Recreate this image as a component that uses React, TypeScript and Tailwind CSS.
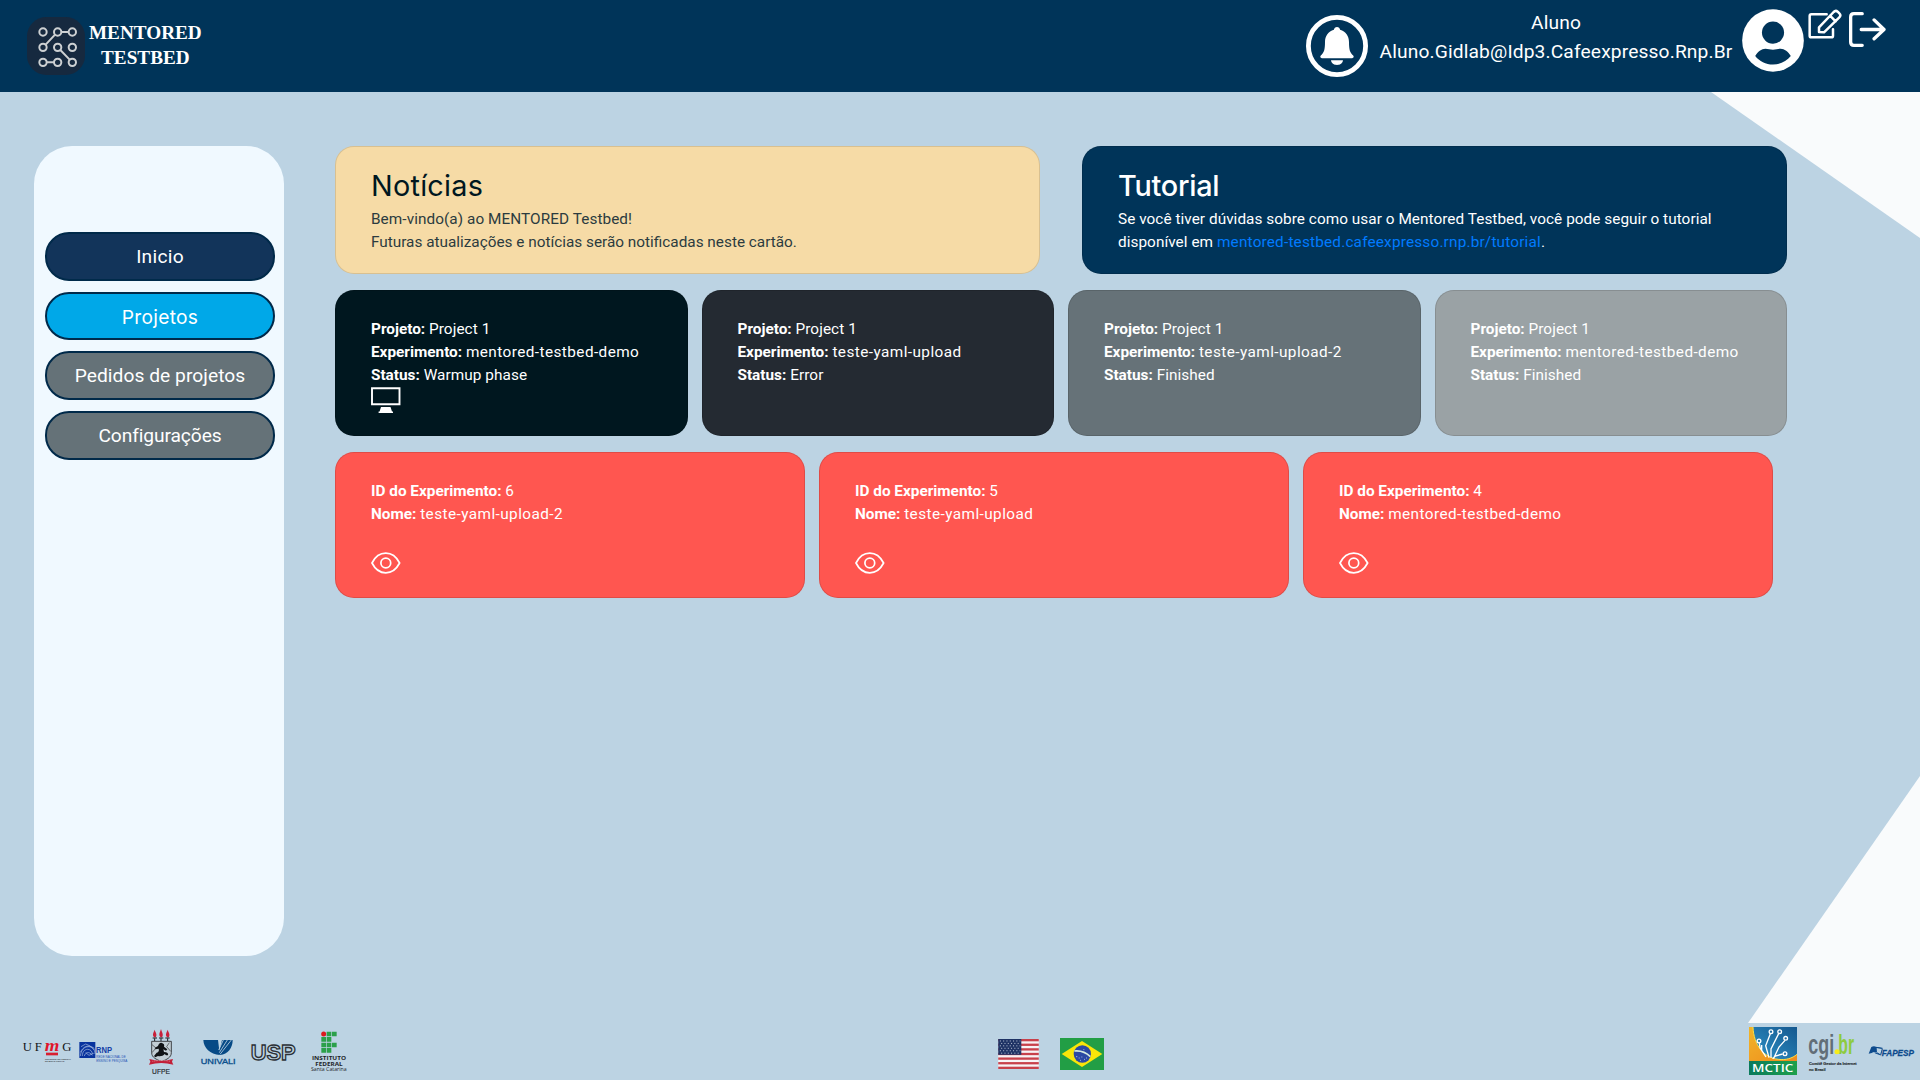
import type { ReactNode } from "react";

function Brand() {
  const nodes = [
    [129, 96], [173, 96], [217, 96],
    [129, 142], [173, 142], [217, 142],
    [129, 187], [173, 187], [217, 187],
  ];
  return (
    <div className="flex items-center">
      <svg viewBox="81 51 174 174" className="size-[58px]" fill="none" stroke="#cdd0d2" strokeWidth="6">
        <rect x="81" y="51" width="174" height="174" rx="58" fill="#16293f" stroke="none" />
        {nodes.map(([x, y]) => (
          <circle key={`${x}-${y}`} cx={x} cy={y} r="11" />
        ))}
        <path d="M184 96h22M165 104l-28 30M181 150l28 29M140 187h22" />
      </svg>
      <div className="mb-[2px] ml-[3px] pl-px text-center font-['Liberation_Serif',serif] text-[19.2px] leading-[25px] font-bold text-white">
        <div>MENTORED</div>
        <div>TESTBED</div>
      </div>
    </div>
  );
}

function BellIcon() {
  return (
    <svg viewBox="0 0 62 62" className="mt-[15px] size-[62px] shrink-0">
      <circle cx="31" cy="31" r="28.6" fill="none" stroke="#fff" strokeWidth="4.8" />
      <path
        d="M31 12c1.600 0 2.900 1.200 3.100 2.700 5.600 1.500 8.900 6.300 8.900 12.300 0 8 1 10.500 4.200 13.600 1 1 .4 2.600-1.100 2.600H15.900c-1.500 0-2.100-1.600-1.100-2.600C18 37.500 19 35 19 27c0-6 3.300-10.800 8.900-12.300C28.100 13.200 29.400 12 31 12z"
        fill="#fff"
      />
      <path d="M25 45.300h12c-.3 2.900-2.900 4.700-6 4.700s-5.700-1.800-6-4.700z" fill="#fff" />
    </svg>
  );
}

function AvatarIcon() {
  return (
    <svg viewBox="20 26 188 190" className="mt-[9px] ml-[9px] h-[63px] w-[62px] shrink-0">
      <ellipse cx="114" cy="121" rx="93.500" ry="94.500" fill="#fff" />
      <circle cx="114" cy="97" r="33.500" fill="#003459" />
      <path
        d="M60 168c8-13 19-22 31-22 8 0 14 3 23 3s15-3 23-3c12 0 23 9 31 22-13 16-32 26-54 26s-41-10-54-26z"
        fill="#003459"
      />
    </svg>
  );
}

function EditIcon() {
  return (
    <svg
      viewBox="220 27 102 90"
      className="mt-[9px] ml-[4px] h-[30px] w-[34px] shrink-0"
      fill="none"
      stroke="#fff"
      strokeWidth="7.500"
      strokeLinejoin="round"
      strokeLinecap="round"
    >
      <path d="M276 43h-46q-5 0-5 5v59q0 5 5 5h60q5 0 5-5V88" />
      <path d="M253 96V82l44-46q6-6 12-1l5 5q6 6 0 12l-46 45zM286 47l17 17" />
    </svg>
  );
}

function LogoutIcon() {
  return (
    <svg
      viewBox="342 34 112 110"
      className="mt-[11px] ml-[7px] h-[37px] w-[37px] shrink-0"
      fill="none"
      stroke="#fff"
      strokeWidth="10"
      strokeLinejoin="round"
      strokeLinecap="round"
    >
      <path d="M382 41h-25q-10 0-10 10v76q0 10 10 10h25" />
      <path d="M379 89h68M418 60l30 29-30 28" />
    </svg>
  );
}

function Header() {
  return (
    <header className="flex h-[92px] shrink-0 justify-between bg-[#003459] pl-[27px]">
      <Brand />
      <div className="flex w-[614px] items-start font-[Roboto,sans-serif] text-[19.2px] leading-[29px] text-white">
        <BellIcon />
        <div className="mt-[8px] ml-[11px] w-[354px] text-center tracking-[0.14px] whitespace-nowrap">
          <div>Aluno</div>
          <div>Aluno.Gidlab@Idp3.Cafeexpresso.Rnp.Br</div>
        </div>
        <AvatarIcon />
        <EditIcon />
        <LogoutIcon />
      </div>
    </header>
  );
}

function Sidebar() {
  const base = "flex w-[230px] items-center justify-center rounded-[24px] border-2 border-[#002a4a] text-[19.2px] text-white";
  return (
    <nav className="flex h-[810px] w-[250px] shrink-0 flex-col rounded-[38px] bg-[#f0f9ff] pt-[86px] pl-[11px] font-[Roboto,sans-serif]">
      <button className={`${base} h-[49px] bg-[#12345a] pt-px tracking-[0.26px]`}>Inicio</button>
      <button className={`${base} mt-[11px] h-[48px] bg-[#00a8e8] pt-[2px] font-[Inter,sans-serif] tracking-[0.28px]`}>
        Projetos
      </button>
      <button className={`${base} mt-[11px] h-[49px] bg-[#657278] pt-px tracking-[0.05px]`}>Pedidos de projetos</button>
      <button className={`${base} mt-[11px] h-[49px] bg-[#657278] pt-px tracking-[-0.1px]`}>Configurações</button>
    </nav>
  );
}

function Field({ label, value, slug = false }: { label: string; value: string; slug?: boolean }) {
  return (
    <div className="whitespace-nowrap">
      <span className="font-bold">{label}:</span>{" "}
      <span className={`font-[450] ${slug ? "tracking-[0.43px]" : "tracking-[0.08px]"}`}>{value}</span>
    </div>
  );
}

function Card({ className, children }: { className: string; children: ReactNode }) {
  return (
    <section className={`rounded-[19px] border border-black/12 px-[35px] text-[15.33px] leading-[23px] ${className}`}>
      {children}
    </section>
  );
}

function MonitorIcon() {
  return (
    <svg viewBox="0 0 30 26" className="block h-[26px] w-[30px]">
      <path d="M1 1.200h27.500v16H1z" fill="none" stroke="#fff" strokeWidth="1.900" />
      <path d="M10 20h9.500l1.500 4.600h1V26H7.600v-1.400h1z" fill="#fff" />
    </svg>
  );
}

function EyeIcon() {
  return (
    <svg viewBox="0 0 30 22" className="mt-[26px] block h-[22px] w-[30px]" fill="none" stroke="#fff" strokeWidth="1.700">
      <path d="M1 11C4 5 9 1.200 14.800 1.200S25.500 5 28.600 11c-3.100 6-8 9.800-13.800 9.800S4 17 1 11z" />
      <circle cx="14.800" cy="11" r="4.900" />
    </svg>
  );
}

const runs = [
  { experiment: "mentored-testbed-demo", status: "Warmup phase", color: "bg-[#00171f]", live: true },
  { experiment: "teste-yaml-upload", status: "Error", color: "bg-[#242a32]", live: false },
  { experiment: "teste-yaml-upload-2", status: "Finished", color: "bg-[#667278]", live: false },
  { experiment: "mentored-testbed-demo", status: "Finished", color: "bg-[#9aa2a5]", live: false },
];

const experiments = [
  { id: "6", name: "teste-yaml-upload-2" },
  { id: "5", name: "teste-yaml-upload" },
  { id: "4", name: "mentored-testbed-demo" },
];

function Dashboard() {
  return (
    <main className="ml-[51px] flex w-[1452px] flex-col gap-4 font-[Roboto,sans-serif] text-white">
      <div className="grid grid-cols-2 gap-[42px]">
        <Card className="h-[128px] bg-[#f6dba6] pt-[21px] text-[#00171f]">
          <h2 className="mb-[5px] font-[Inter,sans-serif] text-[28.8px] leading-[35px] font-normal tracking-[0.25px]">
            Notícias
          </h2>
          <div className="text-[#2c3b3f]">
            <p className="tracking-[0.07px]">Bem-vindo(a) ao MENTORED Testbed!</p>
            <p>Futuras atualizações e notícias serão notificadas neste cartão.</p>
          </div>
        </Card>
        <Card className="h-[128px] bg-[#003459] pt-[21px]">
          <h2 className="mb-[5px] font-[Inter,sans-serif] text-[28.8px] leading-[35px] font-[450] tracking-[-0.25px]">
            Tutorial
          </h2>
          <p className="font-[450] tracking-[0.05px] whitespace-nowrap">
            Se você tiver dúvidas sobre como usar o Mentored Testbed, você pode seguir o tutorial
            <br />
            disponível em{" "}
            <a href="#tutorial" className="font-normal tracking-[0.19px] text-[#007bff]">
              mentored-testbed.cafeexpresso.rnp.br/tutorial
            </a>
            .
          </p>
        </Card>
      </div>
      <div className="grid grid-cols-4 gap-[14px]">
        {runs.map((run, i) => (
          <Card key={i} className={`h-[146px] pt-[27px] ${run.color}`}>
            <Field label="Projeto" value="Project 1" />
            <Field label="Experimento" value={run.experiment} slug />
            <Field label="Status" value={run.status} />
            {run.live && <MonitorIcon />}
          </Card>
        ))}
      </div>
      <div className="grid w-[1438px] grid-cols-3 gap-[14px]">
        {experiments.map((e) => (
          <Card key={e.id} className="h-[146px] bg-[#ff5650] pt-[27px]">
            <Field label="ID do Experimento" value={e.id} />
            <Field label="Nome" value={e.name} slug />
            <EyeIcon />
          </Card>
        ))}
      </div>
    </main>
  );
}

function UfmgLogo() {
  return (
    <svg viewBox="66 87 150 75" className="h-[25px] w-[50px] overflow-visible" fontFamily="Liberation Serif, serif">
      <g fontSize="38" fill="#141418">
        <text x="68" y="122">U</text>
        <text x="104" y="122">F</text>
        <text x="187" y="122">G</text>
      </g>
      <text x="134" y="122" fontSize="50" fontStyle="italic" fontWeight="700" fill="#e0162b" textLength="44" lengthAdjust="spacingAndGlyphs">m</text>
      <path d="M138 128h36v8h-36z" fill="#d81e2f" />
      <g fontFamily="Liberation Sans, sans-serif" fontSize="6.500" fontWeight="700" fill="#3b4247">
        <text x="135" y="149" textLength="78" lengthAdjust="spacingAndGlyphs">UNIVERSIDADE FEDERAL</text>
        <text x="135" y="157" textLength="58" lengthAdjust="spacingAndGlyphs">DE MINAS GERAIS</text>
      </g>
    </svg>
  );
}

function RnpLogo() {
  return (
    <svg viewBox="236 93 150 66" className="ml-[7px] h-[22px] w-[50px] overflow-visible" fontFamily="Liberation Sans, sans-serif" fontWeight="700">
      <path d="M237 96h48v48h-48z" fill="#08339e" />
      <g fill="none" stroke="#a9bde0" strokeWidth="2">
        <path d="M240 138c2-18 12-28 24-28s20 8 20 22M240 127c8-16 22-26 42-12M246 138c0-14 8-20 16-20s14 6 14 14M252 138c2-10 14-16 24-2M242 110l14-8 14 6 12 12M256 128l10 8 14-6" />
      </g>
      <text x="287" y="129" fontSize="26" fill="#1440a6" textLength="48" lengthAdjust="spacingAndGlyphs">RNP</text>
      <g fontSize="10" fontWeight="400" fill="#2450b4">
        <text x="288" y="143" textLength="88" lengthAdjust="spacingAndGlyphs">REDE NACIONAL DE</text>
        <text x="288" y="155" textLength="93" lengthAdjust="spacingAndGlyphs">ENSINO E PESQUISA</text>
      </g>
    </svg>
  );
}

function UfpeLogo() {
  return (
    <svg viewBox="444 54 78 144" className="ml-[19px] h-[48px] w-[26px] overflow-visible">
      <path
        d="M463 82c-8-8-2-14 1-23 2 8 9 14 3 23zM482 82c-8-8-2-14 1-25 2 9 9 16 3 25zM502 82c-8-8-2-14 1-23 2 8 9 14 3 23z"
        fill="#c8203a"
      />
      <path d="M458 84h13M477 84h13M496 84h13M464 85v8M483 85v8M503 85v8" stroke="#17191c" strokeWidth="3" />
      <path d="M455 94h59v34c0 15-14 20-29 27-16-7-30-12-30-27z" fill="#c3ced5" stroke="#26282b" strokeWidth="2.500" />
      <path d="M484 98c8 2 10 6 8 12l10 8-4 4-8-4 2 8c10 0 14 4 12 10h-6l-4-4c-4 6-14 8-20 6l-8 4-4-4 8-10c6-2 8-6 6-12l-10 2-2-4 10-6c2-6 4-10 10-10z" fill="#111316" />
      <path d="M456 104l12 10-12 14M508 98l-8 12 12 14" fill="none" stroke="#333639" strokeWidth="2" />
      <path d="M448 147q35 10 71 0l-3 8 4 9q-36-10-73 0l4-9z" fill="#c21f38" />
      <path d="M457 154q27-5 54 0" fill="none" stroke="#e9a7ae" strokeWidth="2" strokeDasharray="3 2" />
      <text x="456" y="191" fontFamily="Liberation Sans, sans-serif" fontSize="20" fill="#25292e" stroke="#25292e" strokeWidth="0.500" textLength="54" lengthAdjust="spacing">UFPE</text>
    </svg>
  );
}

function UnivaliLogo() {
  return (
    <svg viewBox="600 87 108 78" className="ml-[26px] h-[26px] w-[36px] overflow-visible">
      <path d="M610 90h44l4 32 8-32h32c0 24-14 43-38 45-30-2-49-21-50-45z" fill="#074a86" />
      <path d="M656 120l14-30M658 128l24-38M660 133l34-43" stroke="#bcd3e3" strokeWidth="2.500" />
      <text x="602" y="161" fontFamily="Liberation Sans, sans-serif" fontSize="24" fill="#0a4f8c" stroke="#0a4f8c" strokeWidth="1" textLength="105" lengthAdjust="spacingAndGlyphs">UNIVALI</text>
    </svg>
  );
}

function UspLogo() {
  return (
    <svg viewBox="750 93 138 60" className="ml-[14px] h-[20px] w-[46px] overflow-visible">
      <text
        x="752"
        y="146"
        fontFamily="Liberation Sans, sans-serif"
        fontSize="68"
        fontWeight="700"
        fill="#bcd3e3"
        stroke="#2b3036"
        strokeWidth="4"
        textLength="135"
        lengthAdjust="spacingAndGlyphs"
      >
        USP
      </text>
    </svg>
  );
}

function IfscLogo() {
  return (
    <svg viewBox="930 63 114 126" className="ml-[14px] h-[42px] w-[38px] overflow-visible" fontFamily="Open Sans, sans-serif" fill="#1d2328">
      <circle cx="971" cy="72" r="7.500" fill="#dd1a1f" />
      <path
        d="M980 65h14v14h-14zM996 65h14v14h-14zM964 81h14v14h-14zM980 81h14v14h-14zM964 98h14v14h-14zM980 98h14v14h-14zM996 98h14v14h-14zM964 114h14v14h-14zM980 114h14v14h-14z"
        fill="#2ba04a"
      />
      <g fontWeight="700" fontSize="17">
        <text x="936" y="151" textLength="102" lengthAdjust="spacingAndGlyphs">INSTITUTO</text>
        <text x="946" y="167" textLength="82" lengthAdjust="spacingAndGlyphs">FEDERAL</text>
      </g>
      <text x="933" y="183" fontSize="14" fontWeight="500" textLength="107" lengthAdjust="spacingAndGlyphs">Santa Catarina</text>
    </svg>
  );
}

function UsaFlag() {
  const stripes = [0, 1, 2, 3, 4, 5, 6];
  const rows = [0, 1, 2, 3, 4, 5];
  return (
    <svg viewBox="0 0 123 91" className="h-[30px] w-[41px]">
      <path d="M0 0h123v91H0z" fill="#f7f3f5" />
      {stripes.map((i) => (
        <rect key={i} y={i * 14} width="123" height="7" fill="#c8414b" />
      ))}
      <path d="M0 0h70v48H0z" fill="#1f3365" />
      {rows.map((r) => (
        <path
          key={r}
          d={r % 2 ? `M9 ${6 + r * 7.4}h58` : `M5 ${6 + r * 7.4}h62`}
          stroke="#c9d0e0"
          strokeWidth="2.800"
          strokeDasharray="3 7"
        />
      ))}
    </svg>
  );
}

function BrazilFlag() {
  return (
    <svg viewBox="0 0 132 96" className="ml-[21px] h-[32px] w-[44px]">
      <path d="M0 0h132v96H0z" fill="#229e45" />
      <path d="M66 9l61 39-61 39L5 48z" fill="#f8e509" />
      <circle cx="67" cy="48" r="26" fill="#2b49a3" />
      <path d="M43 39q28-3 48 17" fill="none" stroke="#d5ebe0" strokeWidth="5" />
      <path d="M48 56h4M56 60h3M64 57h3M60 67h3M72 64h3M78 60h3M70 35h3" stroke="#9fb0dc" strokeWidth="3" />
    </svg>
  );
}

function McticLogo() {
  return (
    <svg viewBox="0 0 144 144" className="size-[48px]">
      <defs>
        <linearGradient id="gold" x1="0" y1="0" x2="1" y2="1">
          <stop offset="0" stopColor="#f0b52a" />
          <stop offset="1" stopColor="#f08a1c" />
        </linearGradient>
        <linearGradient id="sky" x1="0" y1="1" x2="1" y2="0">
          <stop offset="0" stopColor="#2f93c8" />
          <stop offset="1" stopColor="#15588f" />
        </linearGradient>
        <linearGradient id="leaf" x1="0" x2="1">
          <stop offset="0" stopColor="#0b7a5c" />
          <stop offset="1" stopColor="#1fa04b" />
        </linearGradient>
      </defs>
      <path d="M0 0h144v104H0z" fill="url(#gold)" />
      <path d="M12 0h132v82c-14 12-34 18-56 15C44 92 14 54 12 0z" fill="url(#sky)" />
      <path d="M12 0c2 54 32 92 76 97 22 3 42-3 56-15" fill="none" stroke="#f8e04a" strokeWidth="3" />
      <g fill="none" stroke="#fff" strokeWidth="4">
        <path d="M31 48l2 14 18 28M64 20L50 56l10 36M89 20L66 66v26M108 40L90 60 74 94M101 81l-22 6-8 8M38 68V54" />
        <circle cx="30" cy="42" r="5.500" />
        <circle cx="66" cy="14" r="5.500" />
        <circle cx="92" cy="14" r="5.500" />
        <circle cx="110" cy="34" r="5.500" />
        <circle cx="108" cy="80" r="5.500" />
      </g>
      <path d="M0 102h144v42H0z" fill="url(#leaf)" />
      <text x="9" y="136" fontFamily="Open Sans, sans-serif" fontSize="34" fontWeight="600" fill="#fff" textLength="124" lengthAdjust="spacingAndGlyphs">MCTIC</text>
    </svg>
  );
}

function CgiLogo() {
  return (
    <svg viewBox="265 202 150 126" className="ml-[11px] h-[42px] w-[50px] overflow-visible" fontFamily="Liberation Sans, sans-serif" fontWeight="700">
      <text transform="translate(266 274) scale(0.64 1)" fontSize="84" fill="#626e77">cgi</text>
      <text transform="translate(356 274) scale(0.56 1)" fontSize="84" fill="#8ecb3f">br</text>
      <circle cx="352" cy="267" r="7.500" fill="#f6ec1a" />
      <g fontSize="12" fill="#2a3035" stroke="#2a3035" strokeWidth="0.500">
        <text x="268" y="308" textLength="143" lengthAdjust="spacingAndGlyphs">Comitê Gestor da Internet</text>
        <text x="268" y="325" textLength="50" lengthAdjust="spacingAndGlyphs">no Brasil</text>
      </g>
    </svg>
  );
}

function FapespLogo() {
  return (
    <svg viewBox="446 256 141 36" className="ml-[10px] h-[12px] w-[47px] overflow-visible">
      <path d="M456 262q8-4 15 0l17 3-5 18h-7l-5-5q-8-2-14 2l-9 2z" fill="#0d4a8c" />
      <path d="M472 265l16 2-5 17-10-6z" fill="#bcd3e3" />
      <path d="M470 263l20 3M466 279l18 7 5-18" fill="none" stroke="#0d4a8c" strokeWidth="3" />
      <text x="487" y="289" fontFamily="Liberation Sans, sans-serif" fontSize="28" fontWeight="700" fontStyle="italic" fill="#0d4a8c" stroke="#0d4a8c" strokeWidth="0.800" textLength="97" lengthAdjust="spacingAndGlyphs">FAPESP</text>
    </svg>
  );
}

function Footer() {
  return (
    <footer className="flex h-[57px] shrink-0 items-center pl-[22px]">
      <div className="flex w-[976px] items-center">
        <UfmgLogo />
        <RnpLogo />
        <UfpeLogo />
        <UnivaliLogo />
        <UspLogo />
        <IfscLogo />
      </div>
      <div className="flex w-[751px] items-center pt-[5px]">
        <UsaFlag />
        <BrazilFlag />
      </div>
      <div className="flex items-center pb-px">
        <McticLogo />
        <CgiLogo />
        <FapespLogo />
      </div>
    </footer>
  );
}

export default function App() {
  return (
    <div className="relative flex h-[1080px] w-[1920px] flex-col overflow-hidden bg-[#bcd3e3]">
      <div className="absolute top-[92px] right-0 h-[146px] w-[209px] bg-[#f9fbfc] [clip-path:polygon(0_0,100%_0,100%_100%)]" />
      <div className="absolute right-0 bottom-[57px] h-[247px] w-[172px] bg-[#f9fbfc] [clip-path:polygon(100%_0,100%_100%,0_100%)]" />
      <Header />
      <div className="relative flex flex-1 items-start pt-[54px] pl-[34px]">
        <Sidebar />
        <Dashboard />
      </div>
      <Footer />
    </div>
  );
}
